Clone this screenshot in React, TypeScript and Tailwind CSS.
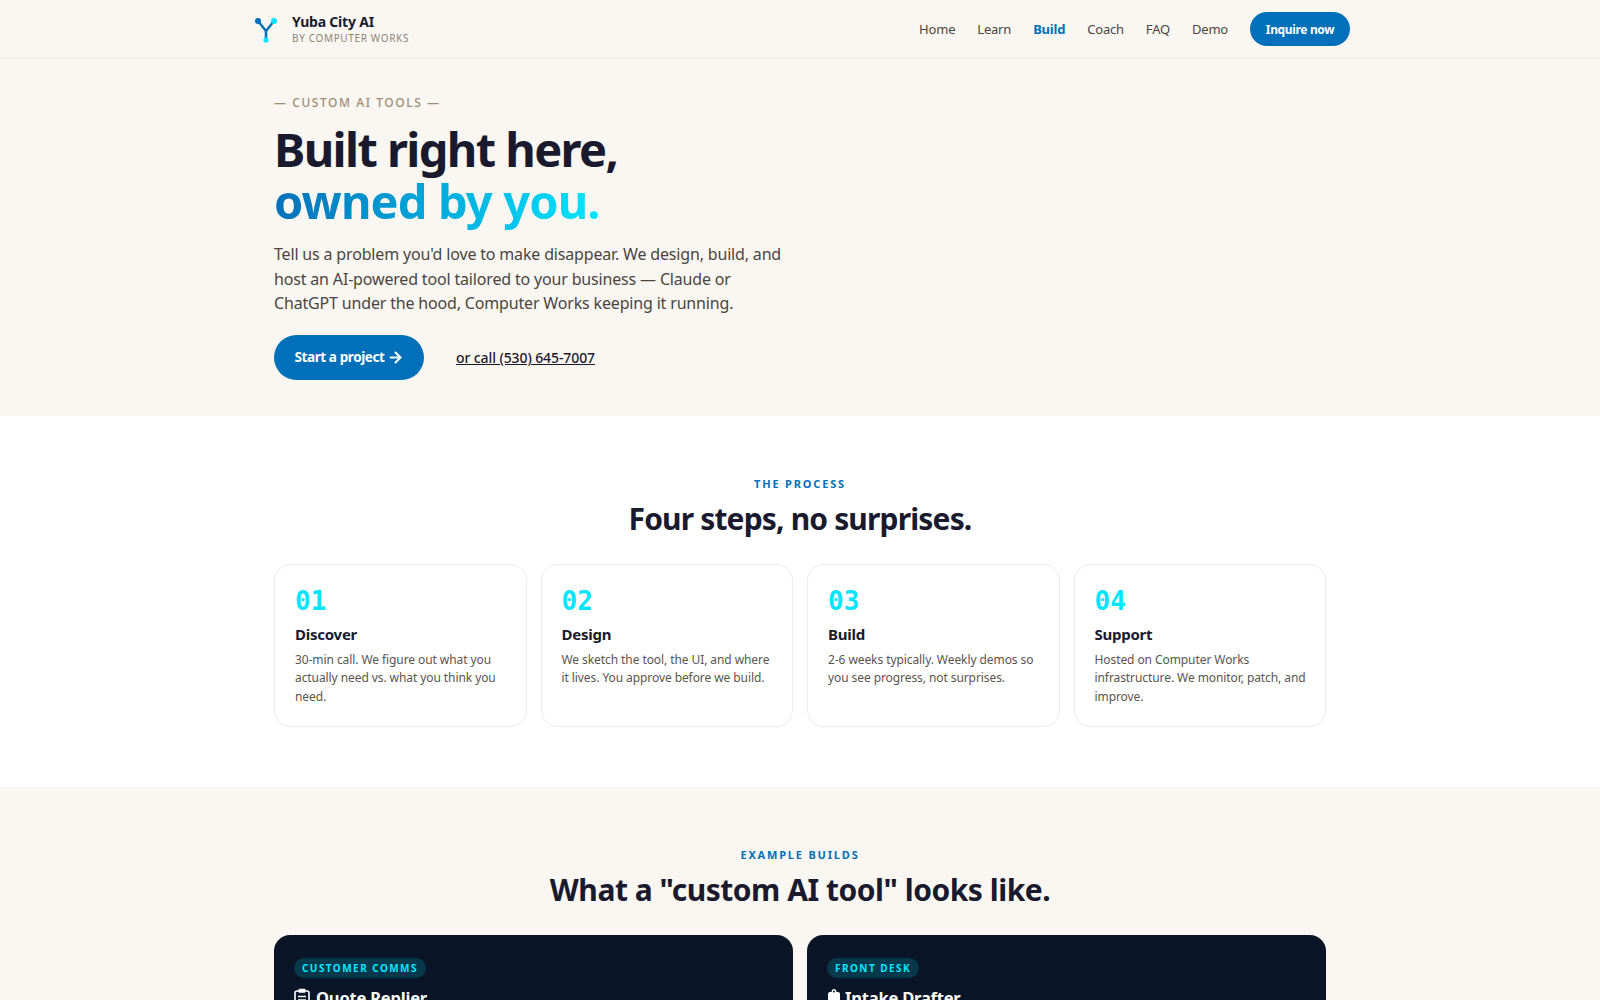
import { ArrowRight } from "lucide-react";

const font = "font-['Noto_Sans','Open_Sans',sans-serif]";

const steps = [
  { n: "01", t: "Discover", d: "30-min call. We figure out what you actually need vs. what you think you need." },
  { n: "02", t: "Design", d: "We sketch the tool, the UI, and where it lives. You approve before we build." },
  { n: "03", t: "Build", d: "2-6 weeks typically. Weekly demos so you see progress, not surprises." },
  { n: "04", t: "Support", d: "Hosted on Computer Works infrastructure. We monitor, patch, and improve." },
];

function Logo() {
  return (
    <svg width="28" height="28" viewBox="0 0 28 28" fill="none">
      <path d="M6 6 L14 16 L22 6" stroke="#0070ba" strokeWidth="2.4" />
      <path d="M14 16 L14 25" stroke="#0070ba" strokeWidth="2.6" />
      <circle cx="6" cy="6" r="3" fill="#0070ba" />
      <circle cx="22" cy="6" r="3" fill="#00e5ff" />
      <circle cx="14" cy="25" r="2.6" fill="#00e5ff" />
    </svg>
  );
}

function ClipboardIcon() {
  return (
    <svg width="16" height="20" viewBox="0 0 16 20" fill="none" className="shrink-0">
      <rect x="1" y="3" width="14" height="16" rx="2" stroke="white" strokeWidth="1.6" />
      <rect x="4.5" y="0.8" width="7" height="4" rx="1" fill="white" />
      <path d="M4 8.5 H12 M4 12 H12 M4 15.5 H12" stroke="white" strokeWidth="1.3" />
    </svg>
  );
}

function BagIcon() {
  return (
    <svg width="14" height="20" viewBox="0 0 14 20" fill="none" className="shrink-0">
      <path d="M1 6 Q1 4 3 4 H4.5 Q4.8 1 7 1 Q9.2 1 9.5 4 H11 Q13 4 13 6 V18 Q13 19 12 19 H2 Q1 19 1 18 Z" fill="white" />
      <circle cx="7" cy="3.4" r="1" fill="#0a1628" />
    </svg>
  );
}

function NavLink({ children, active }: { children: string; active?: boolean }) {
  return <a className={active ? "pt-[2px] font-bold text-[#0070ba]" : "pt-[2px]"}>{children}</a>;
}

function Eyebrow({ children }: { children: string }) {
  return <p className="text-center text-[11px] leading-[16px] font-bold tracking-[0.165em] text-[#0070ba]">{children}</p>;
}

function BuildCard({ tag, title, icon, gap }: { tag: string; title: string; icon: React.ReactNode; gap: string }) {
  return (
    <div className="h-[200px] rounded-[16px] bg-[#0a1628] px-[20px] pt-[23px]">
      <span className="block w-fit rounded-full bg-[#05384a] px-[8px] text-[10px] leading-[20px] font-bold tracking-[1.45px] text-[#00e5ff]">{tag}</span>
      <h3 className={`mt-[8px] flex items-center text-[16.5px] leading-[24px] font-bold tracking-[-0.2px] text-white ${gap}`}>
        {icon}
        {title}
      </h3>
    </div>
  );
}

export default function App() {
  return (
    <div className={`${font} h-[1000px] overflow-hidden bg-[#faf7f2]`}>
      <header className="h-[59px] border-b border-[#ece9e4] bg-[#faf7f2]">
        <div className="mx-auto flex h-[58px] w-[1100px] items-center justify-between pl-[2px]">
          <div className="flex items-center gap-[12px]">
            <Logo />
            <div>
              <div className="text-[14px] leading-[18px] font-bold tracking-[-0.2px] text-[#1a1a2e]">Yuba City AI</div>
              <div className="text-[10px] leading-[14px] tracking-[0.065em] text-[#8c8577]">BY COMPUTER WORKS</div>
            </div>
          </div>
          <nav className="flex items-center gap-[22px] text-[13px] tracking-[-0.2px] text-[#4a4540]">
            <NavLink>Home</NavLink>
            <NavLink>Learn</NavLink>
            <NavLink active>Build</NavLink>
            <NavLink>Coach</NavLink>
            <NavLink>FAQ</NavLink>
            <NavLink>Demo</NavLink>
            <a className="flex h-[34px] w-[100px] items-center justify-center rounded-full bg-[#0070ba] pt-[1px] text-[12px] font-bold tracking-[-0.35px] text-white">Inquire now</a>
          </nav>
        </div>
      </header>

      <section className="h-[357px] bg-[#faf7f2]">
        <div className="mx-auto w-[1052px] pt-[36px]">
          <p className="text-[12px] leading-[16px] font-medium tracking-[0.13em] text-[#a08c72]">— CUSTOM AI TOOLS —</p>
          <h1 className="mt-[12px] text-[47px] leading-[52px] font-bold tracking-[-1.6px] text-[#1a1a2e]">
            Built right here,
            <br />
            <span className="bg-[linear-gradient(90deg,#0070ba,#00e5ff)] bg-clip-text tracking-[-0.87px] text-transparent">owned by you.</span>
          </h1>
          <p className="mt-[15px] w-[520px] text-[16px] leading-[24.5px] tracking-[-0.17px] text-[#4a4540]">
            Tell us a problem you'd love to make disappear. We design, build, and host an AI-powered tool tailored to your business — Claude or ChatGPT under the hood, Computer Works keeping it running.
          </p>
          <div className="mt-[19px] flex items-center gap-[32px]">
            <a className="flex h-[45px] w-[150px] items-center justify-center gap-[2px] rounded-full bg-[#0070ba] pt-[1px] text-[13.5px] font-bold tracking-[-0.4px] text-white">
              Start a project
              <ArrowRight size={17} strokeWidth={2.8} />
            </a>
            <a className="pt-[1px] text-[14px] font-medium tracking-[-0.1px] text-[#1a1a2e] underline">or call (530) 645-7007</a>
          </div>
        </div>
      </section>

      <section className="h-[371px] bg-white pt-[60px]">
        <div className="mx-auto w-[1052px]">
          <Eyebrow>THE PROCESS</Eyebrow>
          <h2 className="mt-[7px] text-center text-[30px] leading-[40px] font-bold tracking-[-0.85px] text-[#1a1a2e]">Four steps, no surprises.</h2>
          <div className="mt-[25px] grid grid-cols-4 gap-[14px]">
            {steps.map((s) => (
              <div key={s.n} className="h-[163px] rounded-[16px] border border-[#eeecea] bg-white pt-[20px] pr-[18px] pl-[20px]">
                <div className="font-['DejaVu_Sans_Mono',monospace] text-[26px] leading-[32px] font-bold text-[#00e5ff]">{s.n}</div>
                <h3 className="mt-[6px] text-[15px] leading-[22px] font-bold tracking-[-0.25px] text-[#1a1a2e]">{s.t}</h3>
                <p className="mt-[6px] text-[12px] leading-[18.4px] tracking-[-0.08px] text-[#5a5550]">{s.d}</p>
              </div>
            ))}
          </div>
        </div>
      </section>

      <section className="bg-[#faf7f2] pt-[60px]">
        <div className="mx-auto w-[1052px]">
          <Eyebrow>EXAMPLE BUILDS</Eyebrow>
          <h2 className="mt-[7px] text-center text-[30px] leading-[40px] font-bold tracking-[-0.48px] text-[#1a1a2e]">What a "custom AI tool" looks like.</h2>
          <div className="mt-[25px] grid grid-cols-2 gap-[14px]">
            <BuildCard tag="CUSTOMER COMMS" title="Quote Replier" icon={<ClipboardIcon />} gap="gap-[6px]" />
            <BuildCard tag="FRONT DESK" title="Intake Drafter" icon={<BagIcon />} gap="gap-[4px]" />
          </div>
        </div>
      </section>
    </div>
  );
}
